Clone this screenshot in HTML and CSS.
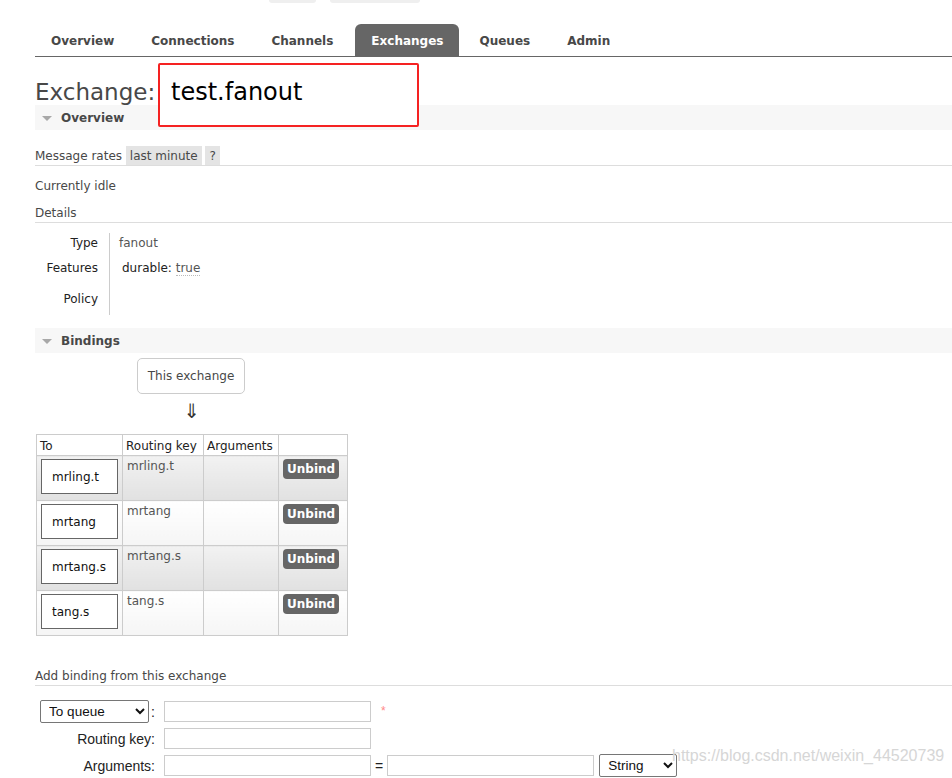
FILE: index.html
```html
<!DOCTYPE html>
<html lang="en">
<head>
    <meta charset="UTF-8">
    <meta name="viewport" content="width=device-width, initial-scale=1.0">
    <title>RabbitMQ Management: Exchange test.fanout</title>
    <link rel="stylesheet" href="styles.css">
</head>
<body>
    <!-- bottom edge of the header buttons -->
    <div class="header-stubs">
        <span class="stub stub-a"></span>
        <span class="stub stub-b"></span>
    </div>

    <!-- main navigation -->
    <ul class="tabs">
        <li>Overview</li>
        <li>Connections</li>
        <li>Channels</li>
        <li class="selected">Exchanges</li>
        <li>Queues</li>
        <li>Admin</li>
    </ul>

    <h1>Exchange: <span class="name-mark">test.fanout</span></h1>

    <!-- overview -->
    <div class="section">
        <h2 class="section-title">Overview</h2>
        <h3 class="rates">Message rates <span class="pill">last minute</span> <span class="pill">?</span></h3>
        <p class="idle">Currently idle</p>
        <h3 class="sub">Details</h3>
        <table class="facts">
            <tr class="r1">
                <th>Type</th>
                <td>fanout</td>
            </tr>
            <tr class="r2">
                <th>Features</th>
                <td><span class="feature">durable: <abbr>true</abbr></span></td>
            </tr>
            <tr class="r3">
                <th>Policy</th>
                <td></td>
            </tr>
        </table>
    </div>

    <!-- bindings -->
    <div class="section">
        <h2 class="section-title">Bindings</h2>
        <div class="this-exchange">This exchange</div>
        <div class="down-arrow">&#8659;</div>

        <table class="bindings">
            <colgroup>
                <col class="c-to">
                <col class="c-key">
                <col class="c-args">
                <col class="c-act">
            </colgroup>
            <thead>
                <tr>
                    <th>To</th>
                    <th>Routing key</th>
                    <th>Arguments</th>
                    <th></th>
                </tr>
            </thead>
            <tbody>
                <tr class="alt1">
                    <td><span class="queue">mrling.t</span></td>
                    <td>mrling.t</td>
                    <td></td>
                    <td><button class="unbind">Unbind</button></td>
                </tr>
                <tr class="alt2">
                    <td><span class="queue">mrtang</span></td>
                    <td>mrtang</td>
                    <td></td>
                    <td><button class="unbind">Unbind</button></td>
                </tr>
                <tr class="alt1">
                    <td><span class="queue">mrtang.s</span></td>
                    <td>mrtang.s</td>
                    <td></td>
                    <td><button class="unbind">Unbind</button></td>
                </tr>
                <tr class="alt2">
                    <td><span class="queue">tang.s</span></td>
                    <td>tang.s</td>
                    <td></td>
                    <td><button class="unbind">Unbind</button></td>
                </tr>
            </tbody>
        </table>

        <h3 class="sub add-title">Add binding from this exchange</h3>
        <form class="binding-form">
            <label class="lbl">
                <select class="dest-type">
                    <option>To queue</option>
                    <option>To exchange</option>
                </select><span class="colon">:</span>
            </label>
            <div class="field">
                <input type="text" class="txt">
                <span class="mand">*</span>
            </div>

            <label class="lbl">Routing key:</label>
            <div class="field">
                <input type="text" class="txt">
            </div>

            <label class="lbl">Arguments:</label>
            <div class="field">
                <input type="text" class="txt">
                <span class="eq">=</span>
                <input type="text" class="txt">
                <select class="arg-type">
                    <option>String</option>
                    <option>Number</option>
                    <option>Boolean</option>
                </select>
            </div>
        </form>
    </div>

    <div class="watermark">https://blog.csdn.net/weixin_44520739</div>
</body>
</html>
```

FILE: styles.css
```css
body {
    margin: 0;
    padding: 0 0 0 35px;
    font-family: "DejaVu Sans", Verdana, sans-serif;
    font-size: 12px;
    color: #484848;
    background: #fff;
}

/* header leftovers */
.header-stubs {
    display: flex;
    gap: 14px;
    height: 3px;
    padding-left: 234px;
}
.stub {
    background: #efefef;
    border-radius: 0 0 4px 4px;
}
.stub-a { width: 47px; }
.stub-b { width: 90px; }

/* tabs */
.tabs {
    display: flex;
    list-style: none;
    margin: 21px 0 0;
    padding: 0;
    height: 32px;
    border-bottom: 1px solid #666;
}
.tabs li {
    padding: 2px 16px 0;
    margin-right: 5px;
    line-height: 30px;
    font-weight: bold;
    color: #484848;
    border-radius: 6px 6px 0 0;
}
.tabs li.selected {
    background: #666;
    color: #fff;
    margin-left: 1px;
    margin-right: 4px;
}

/* page title */
h1 {
    position: relative;
    margin: 21px 0 -1px;
    font-size: 23px;
    font-weight: normal;
    line-height: 28px;
    color: #484848;
}
.name-mark {
    position: absolute;
    z-index: 2;
    left: 123px;
    top: -15px;
    width: 261px;
    height: 64px;
    box-sizing: border-box;
    padding: 13px 0 0 11px;
    border: 2px solid #f52222;
    border-radius: 2px;
    background: #fff;
    font-size: 24px;
    color: #000;
}

/* collapsible section headers */
.section-title {
    position: relative;
    margin: 0;
    height: 25px;
    box-sizing: border-box;
    padding: 2px 0 0 26px;
    line-height: 23px;
    background: #f7f7f7;
    font-size: 12px;
    font-weight: bold;
    color: #484848;
}
.section-title::before {
    content: "";
    position: absolute;
    left: 7px;
    top: 11px;
    border-left: 5px solid transparent;
    border-right: 5px solid transparent;
    border-top: 5px solid #a8a8a8;
}

h3 {
    margin: 0;
    font-size: 12px;
    font-weight: normal;
}
.rates {
    margin-top: 16px;
    padding-top: 1px;
    line-height: 18px;
    border-bottom: 1px solid #ddd;
}
.pill {
    display: inline-block;
    margin-top: -1px;
    padding: 1px 4px 0;
    background: #e4e4e4;
}
.idle {
    margin: 13px 0 0;
    line-height: 15px;
}
.sub {
    margin-top: 12px;
    line-height: 15px;
    padding-bottom: 1px;
    border-bottom: 1px solid #ddd;
}

/* exchange details */
.facts {
    border-collapse: collapse;
    margin: 10px 0 13px;
}
.facts th {
    width: 63px;
    padding: 0 11px 0 0;
    text-align: right;
    font-weight: normal;
    color: #222;
}
.facts td {
    padding: 0 0 0 9px;
    border-left: 1px solid #ccc;
    color: #555;
}
.facts .r1 { height: 20px; }
.facts .r2 { height: 30px; }
.facts .r3 { height: 32px; }
.feature {
    margin-left: 3px;
    color: #222;
}
abbr {
    color: #555;
    text-decoration: none;
    border-bottom: 1px dotted #bbb;
}

/* bindings */
.this-exchange {
    margin: 5px 0 0 102px;
    width: 108px;
    height: 36px;
    box-sizing: border-box;
    border: 1px solid #ccc;
    border-radius: 5px;
    padding-top: 1px;
    line-height: 33px;
    text-align: center;
}
.down-arrow {
    margin: 5px 0 0 103px;
    width: 108px;
    text-align: center;
    font-size: 20px;
    line-height: 24px;
    color: #333;
}

.bindings {
    margin: 11px 0 0 1px;
    width: 311px;
    table-layout: fixed;
    border-collapse: collapse;
}
.c-to { width: 86px; }
.c-key { width: 81px; }
.c-args { width: 75px; }
.c-act { width: 69px; }
.bindings th,
.bindings td {
    border: 1px solid #ccc;
    padding: 0 4px;
    text-align: left;
    font-weight: normal;
}
.bindings th {
    height: 19px;
    padding-top: 1px;
    line-height: 18px;
    padding-left: 3px;
    color: #222;
}
.bindings td {
    height: 38px;
    padding: 3px 4px 3px;
    vertical-align: top;
    line-height: 15px;
    color: #555;
}
.bindings tr.alt1 td {
    background: linear-gradient(#f2f2f2, #e1e1e1);
}
.bindings tr.alt2 td {
    background: linear-gradient(#fff, #f5f5f5);
}
.queue {
    display: block;
    height: 35px;
    box-sizing: border-box;
    border: 1px solid #666;
    background: #fff;
    padding: 1px 0 0 10px;
    line-height: 32px;
    color: #111;
}
.unbind {
    display: inline-block;
    border: 0;
    border-radius: 4px;
    padding: 0 4px;
    height: 20px;
    line-height: 20px;
    background: #666;
    color: #fff;
    font-family: "DejaVu Sans", Verdana, sans-serif;
    font-size: 12px;
    font-weight: bold;
}

/* add binding form */
.add-title {
    margin-top: 33px;
}
.binding-form {
    display: grid;
    grid-template-columns: 120px max-content;
    column-gap: 9px;
    row-gap: 5px;
    margin-top: 14px;
    font-family: "Liberation Sans", Arial, sans-serif;
    font-size: 14px;
    color: #222;
}
.lbl {
    display: flex;
    align-items: center;
    justify-content: flex-end;
}
.colon {
    margin-left: 2px;
}
.field {
    display: flex;
    align-items: center;
}
.txt {
    width: 207px;
    height: 21px;
    box-sizing: border-box;
    margin: 0;
    border: 1px solid #ccc;
    padding: 0 3px;
}
select {
    height: 23px;
    box-sizing: border-box;
    margin: 0;
    border: 1px solid #767676;
    border-radius: 2px;
    background: #fff;
    padding: 0 0 0 4px;
    font-family: "Liberation Sans", Arial, sans-serif;
    font-size: 13.5px;
    color: #111;
}
.dest-type { width: 109px; }
.arg-type {
    width: 78px;
    margin-left: 5px;
}
.mand {
    align-self: flex-start;
    margin: 4px 0 0 10px;
    font-size: 12px;
    color: #f88;
}
.eq {
    margin: 0 4px;
}

.watermark {
    position: absolute;
    left: 672px;
    top: 747px;
    font-family: "Liberation Sans", Arial, sans-serif;
    font-size: 16px;
    color: #d6d6d6;
    white-space: nowrap;
}
```
